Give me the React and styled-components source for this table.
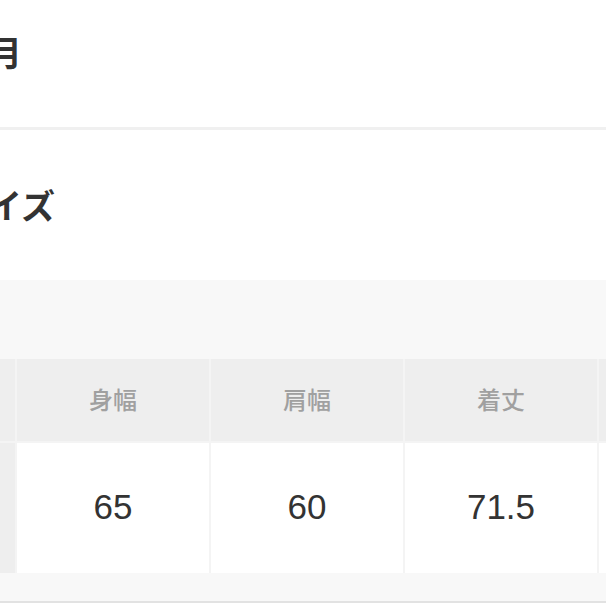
import styled, { createGlobalStyle } from "styled-components"

const GlobalStyle = createGlobalStyle`
  html, body {
    margin: 0;
    padding: 0;
    background: #ffffff;
  }
  body {
    width: 606px;
    height: 606px;
    overflow: hidden;
    font-family: "Noto Sans CJK JP", "Noto Sans", sans-serif;
  }
`

const columns = ["身幅", "肩幅", "着丈", "袖丈"]
const rows = [{ label: "M", values: ["65", "60", "71.5", "24"] }]

function App() {
  return (
    <>
      <GlobalStyle />
      <Page>
        <Section $first>
          <Title>年月</Title>
        </Section>
        <Divider />
        <Section>
          <Title>サイズ</Title>
        </Section>
        <TableArea>
          <SizeTable>
            <HeadCell>サイズ</HeadCell>
            {columns.map((c) => (
              <HeadCell key={c}>{c}</HeadCell>
            ))}
            {rows.map((r) => (
              <>
                <LabelCell key={r.label}>{r.label}</LabelCell>
                {r.values.map((v, i) => (
                  <ValueCell key={i}>{v}</ValueCell>
                ))}
              </>
            ))}
          </SizeTable>
        </TableArea>
      </Page>
    </>
  )
}

export default App

const Page = styled.div`
  width: 606px;
  overflow: hidden;
`

const Section = styled.section`
  padding: ${(p) => (p.$first ? "26px 0 50px" : "49px 0 50px")};
`

const Title = styled.h2`
  margin: 0 0 0 -46px;
  font-size: 34px;
  line-height: 51px;
  font-weight: 700;
  color: #333333;
  white-space: nowrap;
`

const Divider = styled.hr`
  margin: 0;
  border: none;
  height: 3px;
  background: #f0f0f0;
`

const TableArea = styled.div`
  background: #f8f8f8;
  padding: 79px 0 28px;
  border-bottom: 2px solid #e2e2e2;
`

const SizeTable = styled.div`
  display: grid;
  grid-template-columns: repeat(5, 192px);
  grid-template-rows: 82px 130px;
  gap: 2px;
  margin-left: -177px;
  width: max-content;
  background: #f4f4f4;
`

const Cell = styled.div`
  display: flex;
  align-items: center;
  justify-content: center;
`

const HeadCell = styled(Cell)`
  background: #eeeeee;
  color: #a0a0a0;
  font-size: 24px;
  font-weight: 500;
  padding-bottom: 4px;
`

const LabelCell = styled(Cell)`
  background: #eeeeee;
  color: #a0a0a0;
  font-size: 24px;
`

const ValueCell = styled(Cell)`
  background: #ffffff;
  color: #333333;
  font-family: "Liberation Sans", Arial, sans-serif;
  font-size: 35px;
  padding-bottom: 2px;
`
